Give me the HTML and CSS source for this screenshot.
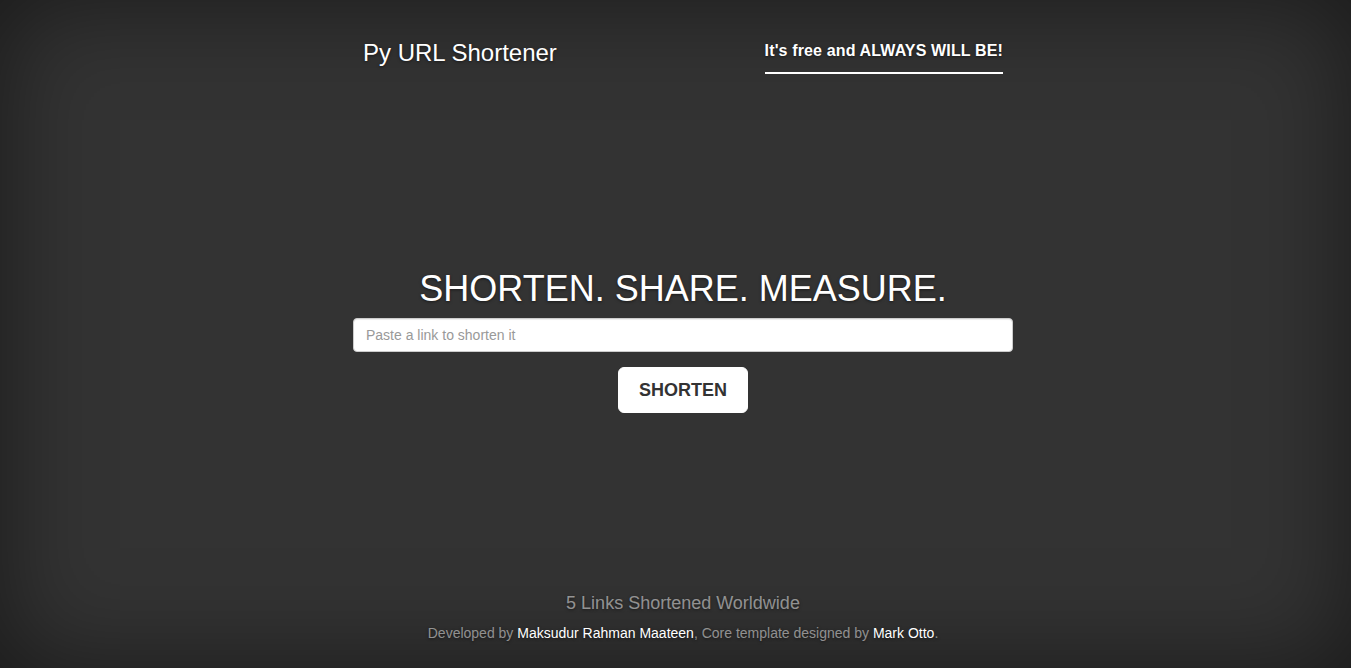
FILE: index.html
```html
<!DOCTYPE html>
<html lang="en">
<head>
<meta charset="utf-8">
<title>Py URL Shortener</title>
<link rel="stylesheet" href="styles.css">
</head>
<body>
<div class="site">
  <header class="masthead">
    <h3 class="brand">Py URL Shortener</h3>
    <nav class="nav">
      <a class="nav-link active" href="#">It's free and ALWAYS WILL BE!</a>
    </nav>
  </header>
  <main class="cover">
    <h1 class="cover-heading">SHORTEN. SHARE. MEASURE.</h1>
    <form class="shorten-form" onsubmit="return false;">
      <input class="url-input" type="text" placeholder="Paste a link to shorten it">
      <button class="btn-shorten" type="submit">SHORTEN</button>
    </form>
  </main>
  <footer class="mastfoot">
    <h4 class="count">5 Links Shortened Worldwide</h4>
    <p class="credits">Developed by <a href="#">Maksudur Rahman Maateen</a>, Core template designed by <a href="#">Mark Otto</a>.</p>
  </footer>
</div>
</body>
</html>
```
FILE: styles.css
```css
html, body {
  height: 100%;
}
body {
  margin: 0;
  background: #333;
  color: #fff;
  font-family: "Liberation Sans", Arial, Helvetica, sans-serif;
  font-size: 14px;
  line-height: 20px;
  text-align: center;
  text-shadow: 0 1px 3px rgba(0, 0, 0, .5);
  box-shadow: inset 0 0 100px rgba(0, 0, 0, .5);
}
.site {
  display: flex;
  flex-direction: column;
  min-height: 100vh;
  box-sizing: border-box;
  padding-left: 15px;
}
.masthead {
  width: 700px;
  margin: 0 auto;
  padding: 30px;
  box-sizing: border-box;
  display: flex;
  justify-content: space-between;
  align-items: flex-start;
}
.brand {
  margin: 10px 0 0;
  font-size: 24px;
  line-height: 26.4px;
  font-weight: normal;
}
.nav {
  margin-top: 11px;
}
.nav-link {
  display: block;
  font-size: 16px;
  line-height: 20px;
  font-weight: bold;
  letter-spacing: 0.14px;
  color: rgba(255, 255, 255, .75);
  text-decoration: none;
  padding-bottom: 11px;
  border-bottom: 2px solid transparent;
}
.nav-link.active {
  color: #fff;
  border-bottom-color: #fff;
}
.cover {
  width: 660px;
  margin: 0 auto;
  padding-top: 165px;
}
.cover-heading {
  margin: 0 0 9px;
  font-size: 36px;
  line-height: 39.6px;
  font-weight: normal;
}
.shorten-form {
  display: flex;
  flex-direction: column;
  align-items: center;
  gap: 15px;
}
.url-input {
  display: block;
  width: 100%;
  height: 34px;
  box-sizing: border-box;
  padding: 6px 12px;
  font-family: "Liberation Sans", Arial, sans-serif;
  font-size: 14px;
  line-height: 20px;
  color: #555;
  background: #fff;
  border: 1px solid #ccc;
  border-radius: 4px;
  box-shadow: inset 0 1px 1px rgba(0, 0, 0, .075);
  text-shadow: none;
  outline: none;
}
.url-input::placeholder {
  color: #999;
}
.btn-shorten {
  padding: 10px 20px;
  font-family: "Liberation Sans", Arial, sans-serif;
  font-size: 18px;
  line-height: 24px;
  font-weight: bold;
  color: #333;
  background: #fff;
  border: 1px solid #fff;
  border-radius: 6px;
  text-shadow: none;
  cursor: pointer;
}
.mastfoot {
  margin-top: auto;
  padding-bottom: 25px;
  color: rgba(255, 255, 255, .5);
}
.count {
  margin: 0 0 9px;
  font-size: 18px;
  line-height: 19.8px;
  font-weight: normal;
}
.credits {
  margin: 0;
  font-size: 14px;
  line-height: 20px;
}
.credits a {
  color: #fff;
  text-decoration: none;
}
```
